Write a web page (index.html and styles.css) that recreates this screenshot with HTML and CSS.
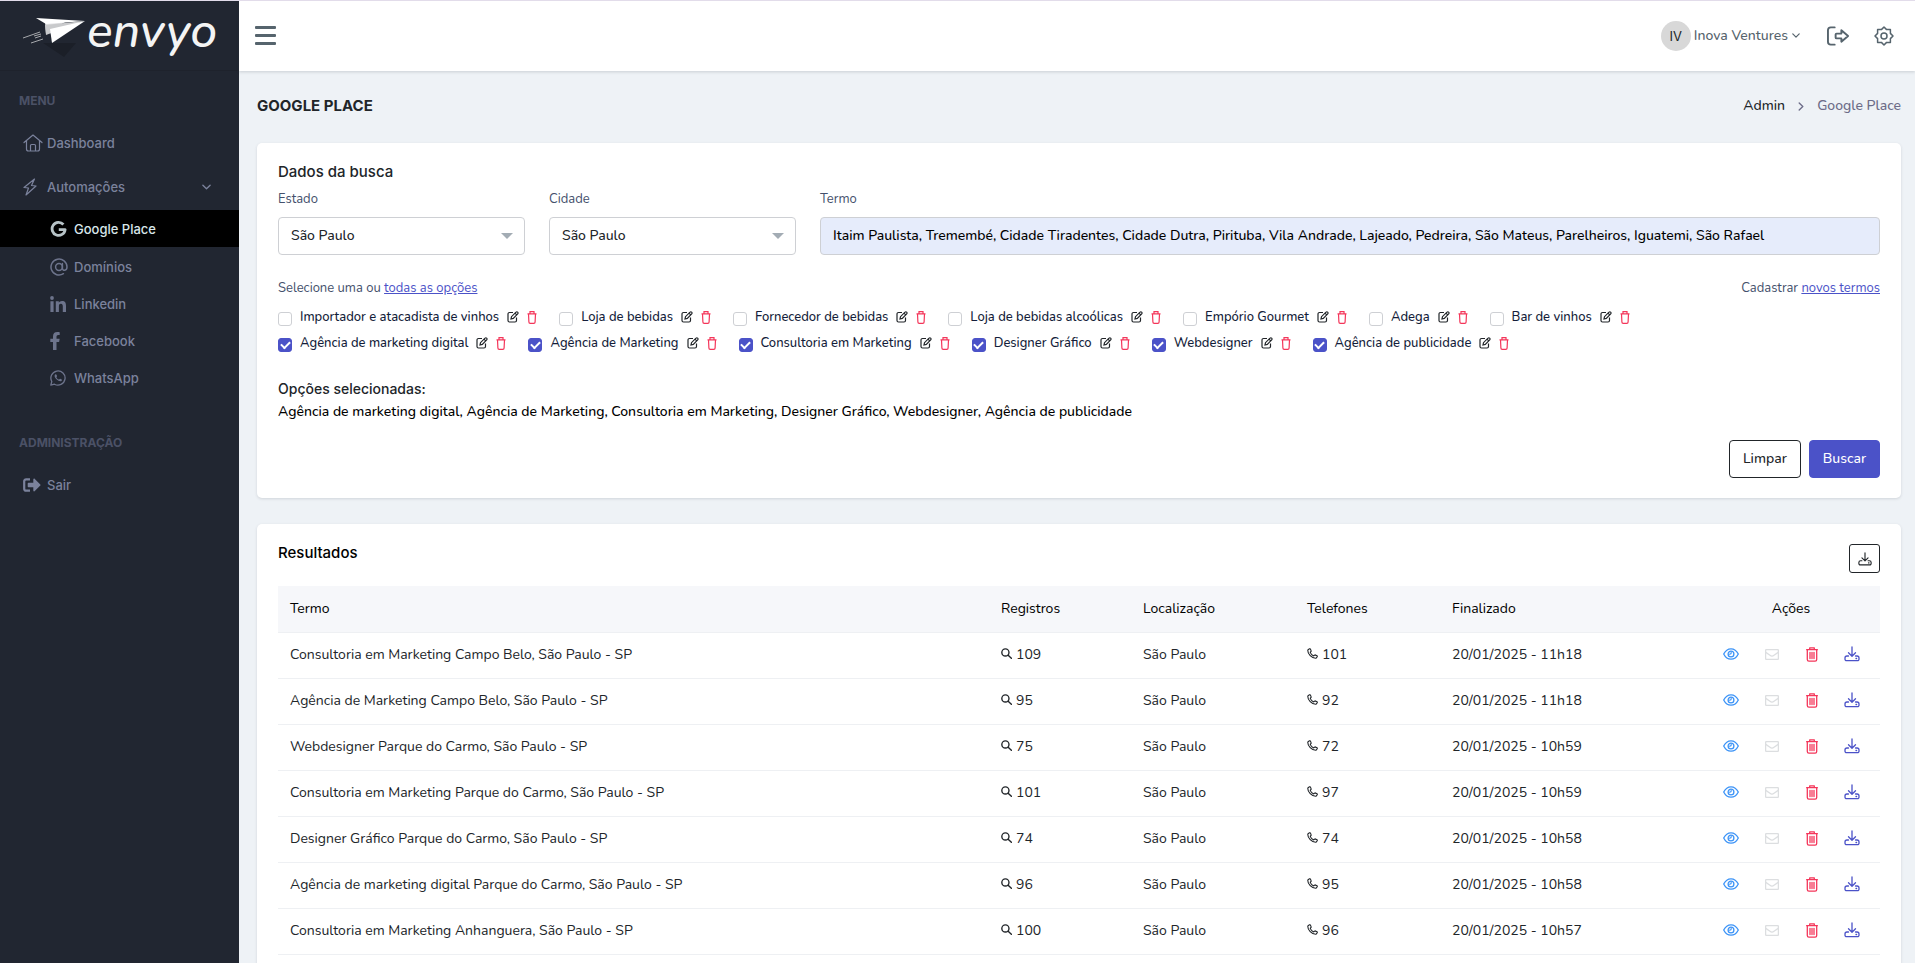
FILE: index.html
```html
<!DOCTYPE html>
<html lang="pt-BR">

<head>
  <meta charset="utf-8">
  <title>Google Place</title>
  <link rel="stylesheet" href="styles.css">
</head>

<body>

  <svg class="sprite" aria-hidden="true">
    <symbol id="i-home" viewBox="0 0 20 18"><path d="M1 8.500 10 1l9 7.500M3.500 6.800V15a2 2 0 0 0 2 2h9a2 2 0 0 0 2-2V6.800M7.500 17v-5.500a1 1 0 0 1 1-1h3a1 1 0 0 1 1 1V17" /></symbol>
    <symbol id="i-bolt" viewBox="0 0 14 18"><path d="M11.500 1 1 9.500 5.500 10 3 17 13 8 8.500 7.500z" /></symbol>
    <symbol id="i-down" viewBox="0 0 10 6"><path d="M1 1l4 4 4-4" /></symbol>
    <symbol id="i-right" viewBox="0 0 6 10"><path d="M1 1l4 4-4 4" /></symbol>
    <symbol id="i-google" viewBox="0 0 18 18"><path d="M14.200 4.200A6.900 6.900 0 1 0 16 9.600H9.300" /></symbol>
    <symbol id="i-at" viewBox="0 0 18 18"><circle cx="9" cy="9" r="3.400" /><path d="M12.400 5.600v4.600c0 3 4.600 2.600 4.600-1.200a8 8 0 1 0-3.600 6.700" /></symbol>
    <symbol id="i-linkedin" viewBox="0 0 16 16"><circle cx="2" cy="2" r="1.900" /><path d="M.4 5.300h3.200V16H.4zM5.800 5.300h3v1.500c.6-1 1.800-1.800 3.200-1.800 3.200 0 4 2 4 4.900V16h-3.200v-5.400c0-1.400-.2-2.900-1.900-2.900-1.800 0-2 1.400-2 2.800V16H5.800z" /></symbol>
    <symbol id="i-facebook" viewBox="0 0 11 18"><path d="M3 18V10H.3V6.700H3V4.400C3 1.600 4.600.1 7.200.1c1.200 0 2.500.2 2.500.2V3H8.300C7 3 6.500 3.900 6.500 4.800v1.900h3.200L9.100 10H6.500v8z" /></symbol>
    <symbol id="i-whatsapp" viewBox="0 0 16 16"><path d="M.8 15.200 1.800 11.500A7.100 7.100 0 1 1 4.500 14.200z" /><path d="M5.700 4.300c-1.800.8-1.200 3.200.8 5s4.300 2.700 5.300 1.100c.5-.8-.1-1-1.500-1.700-.8-.3-.9.900-1.500.8-1-.3-2.100-1.300-2.400-2.300-.1-.4.800-.6.600-1.200-.4-1-.7-1.900-1.300-1.700z" class="solid" /></symbol>
    <symbol id="i-out-solid" viewBox="0 0 18 14"><path d="M7 1.300H3.200a2 2 0 0 0-2 2v7.400a2 2 0 0 0 2 2H7" class="stroke" /><path d="M5.500 4.800h4.800V1.500c0-.8.900-1.200 1.500-.6l5.500 5.500c.4.400.4.900 0 1.200l-5.500 5.500c-.6.600-1.500.2-1.500-.6V9.200H5.500c-.5 0-.8-.3-.8-.8V5.600c0-.5.300-.8.800-.8z" /></symbol>
    <symbol id="i-out" viewBox="0 0 24 20"><path d="M8 1H4a3 3 0 0 0-3 3v12a3 3 0 0 0 3 3h4M10 7.500h5V4l7 6-7 6v-3.500h-5a1 1 0 0 1-1-1v-3a1 1 0 0 1 1-1z" /></symbol>
    <symbol id="i-gear" viewBox="0 0 20 20"><path d="M10 1 12.600 3.600H16.400V7.400L19 10 16.400 12.600V16.400H12.600L10 19 7.400 16.400H3.600V12.600L1 10 3.600 7.400V3.600H7.400z" /><circle cx="10" cy="10" r="3" /></symbol>
    <symbol id="i-edit" viewBox="0 0 12 12"><path d="M6 1.500H2.500A1.500 1.500 0 0 0 1 3v6.500A1.500 1.500 0 0 0 2.500 11H8a1.500 1.500 0 0 0 1.500-1.500V6.500M4 8l.5-2.300L9 1.200a1.100 1.100 0 0 1 1.700 1.600L6.300 7.400zM8 2.200 9.700 3.900" /></symbol>
    <symbol id="i-bin" viewBox="0 0 10 13"><path d="M.5 2.800h9M3 2.800V.7h4v2.100M1.500 2.800l.4 8.200c0 .8.500 1.300 1.300 1.300h3.600c.8 0 1.300-.5 1.300-1.300l.4-8.200" /></symbol>
    <symbol id="i-save" viewBox="0 0 16 16"><path d="M8 1v9M4.500 6.800 8 10.200l3.500-3.400M4.500 10H3a2 2 0 0 0-2 2v1.200a1.500 1.500 0 0 0 1.500 1.500h11a1.500 1.500 0 0 0 1.500-1.500V12a2 2 0 0 0-2-2h-1.500M12 12.500h.6" /></symbol>
    <symbol id="i-search" viewBox="0 0 12 12"><circle cx="4.800" cy="4.800" r="3.900" /><path d="M7.800 7.800l3.500 3.500" /></symbol>
    <symbol id="i-phone" viewBox="0 0 12 12"><path d="M2.700.9.900 2.100C.5 6.500 5.200 11.500 9.900 11.200l1.300-1.800c.2-.4 0-.8-.3-1L8.700 7.500 7.300 8.600C5.600 7.900 4.200 6.500 3.500 4.800L4.600 3.400 3.800 1.200C3.600.8 3.100.7 2.700.9z" /></symbol>
    <symbol id="i-eye" viewBox="0 0 16 12"><path d="M.7 6C2.500 2.400 5 .8 8 .8S13.500 2.400 15.300 6C13.500 9.600 11 11.200 8 11.200S2.500 9.600.7 6z" /><circle cx="8" cy="6" r="2.900" /><path d="M6.700 6.200A1.500 1.500 0 0 0 8.200 4.700" /></symbol>
    <symbol id="i-mail" viewBox="0 0 14 11"><rect x=".6" y=".6" width="12.800" height="9.800" rx="1" /><path d="M.8 3.400 5 6.300c1.300 1 2.700 1 4 0l4.200-2.900" /></symbol>
    <symbol id="i-trash" viewBox="0 0 12 15"><path d="M.6 2.700h10.800M3.700 2.700V.8h4.600v1.900M1.300 2.700v9.800c0 1 .7 1.700 1.600 1.700h6.200c1 0 1.600-.7 1.600-1.700V2.700M4 5.300v6.300M6 5.300v6.300M8 5.300v6.300" /></symbol>
  </svg>

  <aside class="sidebar">
    <a class="logo" href="#">
      <svg class="plane" viewBox="0 0 64 42" aria-hidden="true">
        <path class="shade" d="M20 27h33L41 41z" />
        <path class="tail" d="M22 6h20L23 18z" />
        <path class="wing" d="M13 2l49 3-39 3z" />
        <path class="fold" d="M22 9 61 5 23 19z" />
        <path class="wing" d="M27 13 62 5 29 27z" />
        <path class="trail" d="M0 22l17-6M11 20l7-2M12 22l6-2M8 27l12-4" />
      </svg>
      <span>envyo</span>
    </a>
    <nav>
      <h6>MENU</h6>
      <ul class="menu">
        <li><a href="#"><svg class="line home"><use href="#i-home" /></svg>Dashboard</a></li>
        <li>
          <a href="#"><svg class="line bolt"><use href="#i-bolt" /></svg>Automações<svg class="line caret"><use href="#i-down" /></svg></a>
          <ul class="submenu">
            <li class="active"><a href="#"><svg class="line google"><use href="#i-google" /></svg>Google Place</a></li>
            <li><a href="#"><svg class="line at"><use href="#i-at" /></svg>Domínios</a></li>
            <li><a href="#"><svg class="fill in"><use href="#i-linkedin" /></svg>Linkedin</a></li>
            <li><a href="#"><svg class="fill fb"><use href="#i-facebook" /></svg>Facebook</a></li>
            <li><a href="#"><svg class="line wa"><use href="#i-whatsapp" /></svg>WhatsApp</a></li>
          </ul>
        </li>
      </ul>
      <h6>ADMINISTRAÇÃO</h6>
      <ul class="menu">
        <li><a href="#"><svg class="fill exit"><use href="#i-out-solid" /></svg>Sair</a></li>
      </ul>
    </nav>
  </aside>

  <div class="page">
    <header class="topbar">
      <button class="burger" type="button" aria-label="Menu"><i></i><i></i><i></i></button>
      <div class="user">
        <button class="profile" type="button"><span class="avatar">IV</span>Inova Ventures<svg class="line"><use href="#i-down" /></svg></button>
        <button class="out" type="button" aria-label="Sair"><svg class="line"><use href="#i-out" /></svg></button>
        <button class="gear" type="button" aria-label="Configurações"><svg class="line"><use href="#i-gear" /></svg></button>
      </div>
    </header>

    <main>
      <div class="title">
        <h1>GOOGLE PLACE</h1>
        <div class="crumbs"><a href="#">Admin</a><svg class="line"><use href="#i-right" /></svg><span>Google Place</span></div>
      </div>

      <form class="card search">
        <h2>Dados da busca</h2>
        <div class="fields">
          <div class="field">
            <label for="estado">Estado</label>
            <div class="select"><select id="estado"><option>São Paulo</option></select></div>
          </div>
          <div class="field">
            <label for="cidade">Cidade</label>
            <div class="select"><select id="cidade"><option>São Paulo</option></select></div>
          </div>
          <div class="field wide">
            <label for="termo">Termo</label>
            <input type="text" id="termo" value="Itaim Paulista, Tremembé, Cidade Tiradentes, Cidade Dutra, Pirituba, Vila Andrade, Lajeado, Pedreira, São Mateus, Parelheiros, Iguatemi, São Rafael">
          </div>
        </div>
        <div class="hint">
          <span>Selecione uma ou <a href="#">todas as opções</a></span>
          <span>Cadastrar <a href="#">novos termos</a></span>
        </div>
        <div class="options">
          <div class="option"><input type="checkbox" id="o1"><label for="o1">Importador e atacadista de vinhos</label><button type="button" aria-label="Editar"><svg class="edit"><use href="#i-edit" /></svg></button><button type="button" aria-label="Excluir"><svg class="bin"><use href="#i-bin" /></svg></button></div>
          <div class="option"><input type="checkbox" id="o2"><label for="o2">Loja de bebidas</label><button type="button" aria-label="Editar"><svg class="edit"><use href="#i-edit" /></svg></button><button type="button" aria-label="Excluir"><svg class="bin"><use href="#i-bin" /></svg></button></div>
          <div class="option"><input type="checkbox" id="o3"><label for="o3">Fornecedor de bebidas</label><button type="button" aria-label="Editar"><svg class="edit"><use href="#i-edit" /></svg></button><button type="button" aria-label="Excluir"><svg class="bin"><use href="#i-bin" /></svg></button></div>
          <div class="option"><input type="checkbox" id="o4"><label for="o4">Loja de bebidas alcoólicas</label><button type="button" aria-label="Editar"><svg class="edit"><use href="#i-edit" /></svg></button><button type="button" aria-label="Excluir"><svg class="bin"><use href="#i-bin" /></svg></button></div>
          <div class="option"><input type="checkbox" id="o5"><label for="o5">Empório Gourmet</label><button type="button" aria-label="Editar"><svg class="edit"><use href="#i-edit" /></svg></button><button type="button" aria-label="Excluir"><svg class="bin"><use href="#i-bin" /></svg></button></div>
          <div class="option"><input type="checkbox" id="o6"><label for="o6">Adega</label><button type="button" aria-label="Editar"><svg class="edit"><use href="#i-edit" /></svg></button><button type="button" aria-label="Excluir"><svg class="bin"><use href="#i-bin" /></svg></button></div>
          <div class="option"><input type="checkbox" id="o7"><label for="o7">Bar de vinhos</label><button type="button" aria-label="Editar"><svg class="edit"><use href="#i-edit" /></svg></button><button type="button" aria-label="Excluir"><svg class="bin"><use href="#i-bin" /></svg></button></div>
        </div>
        <div class="options">
          <div class="option"><input type="checkbox" id="o8" checked><label for="o8">Agência de marketing digital</label><button type="button" aria-label="Editar"><svg class="edit"><use href="#i-edit" /></svg></button><button type="button" aria-label="Excluir"><svg class="bin"><use href="#i-bin" /></svg></button></div>
          <div class="option"><input type="checkbox" id="o9" checked><label for="o9">Agência de Marketing</label><button type="button" aria-label="Editar"><svg class="edit"><use href="#i-edit" /></svg></button><button type="button" aria-label="Excluir"><svg class="bin"><use href="#i-bin" /></svg></button></div>
          <div class="option"><input type="checkbox" id="o10" checked><label for="o10">Consultoria em Marketing</label><button type="button" aria-label="Editar"><svg class="edit"><use href="#i-edit" /></svg></button><button type="button" aria-label="Excluir"><svg class="bin"><use href="#i-bin" /></svg></button></div>
          <div class="option"><input type="checkbox" id="o11" checked><label for="o11">Designer Gráfico</label><button type="button" aria-label="Editar"><svg class="edit"><use href="#i-edit" /></svg></button><button type="button" aria-label="Excluir"><svg class="bin"><use href="#i-bin" /></svg></button></div>
          <div class="option"><input type="checkbox" id="o12" checked><label for="o12">Webdesigner</label><button type="button" aria-label="Editar"><svg class="edit"><use href="#i-edit" /></svg></button><button type="button" aria-label="Excluir"><svg class="bin"><use href="#i-bin" /></svg></button></div>
          <div class="option"><input type="checkbox" id="o13" checked><label for="o13">Agência de publicidade</label><button type="button" aria-label="Editar"><svg class="edit"><use href="#i-edit" /></svg></button><button type="button" aria-label="Excluir"><svg class="bin"><use href="#i-bin" /></svg></button></div>
        </div>
        <h3>Opções selecionadas:</h3>
        <p class="selected">Agência de marketing digital, Agência de Marketing, Consultoria em Marketing, Designer Gráfico, Webdesigner, Agência de publicidade</p>
        <div class="buttons">
          <button class="btn outline" type="reset">Limpar</button>
          <button class="btn primary" type="button">Buscar</button>
        </div>
      </form>

      <section class="card results">
        <div class="results-head">
          <h2>Resultados</h2>
          <button class="export" type="button" aria-label="Baixar"><svg class="line"><use href="#i-save" /></svg></button>
        </div>
        <table>
          <thead>
            <tr>
              <th>Termo</th>
              <th class="c-reg">Registros</th>
              <th class="c-loc">Localização</th>
              <th class="c-tel">Telefones</th>
              <th class="c-fin">Finalizado</th>
              <th class="c-act">Ações</th>
            </tr>
          </thead>
          <tbody id="rows"></tbody>
        </table>
      </section>
    </main>
  </div>

  <script src="script.js"></script>

</body>

</html>
```
FILE: styles.css
```css
* {
  box-sizing: border-box;
}

body {
  margin: 0;
  min-height: 100vh;
  display: flex;
  border-top: 1px solid #e2dcea;
  background: #eef2f6;
  color: #212529;
  font: 14px/20px Nunito, Lato, sans-serif;
}

h1, h2, h3, h6, p, ul {
  margin: 0;
  padding: 0;
}

ul {
  list-style: none;
}

button {
  border: 0;
  padding: 0;
  background: none;
  color: inherit;
  font: inherit;
  cursor: pointer;
}

svg {
  flex: none;
}

.sprite {
  position: absolute;
  width: 0;
  height: 0;
}

.line {
  fill: none;
  stroke: currentColor;
  stroke-width: 1.5;
  stroke-linejoin: round;
  stroke-linecap: round;
}

.fill {
  fill: currentColor;
}

.solid {
  fill: currentColor;
  stroke: none;
}

.stroke {
  fill: none;
  stroke: currentColor;
  stroke-width: 2.2;
}

/* sidebar */
.sidebar {
  flex: none;
  width: 239px;
  background: #212631;
  font: 500 13px/20px Inter, sans-serif;
}

.logo {
  display: flex;
  height: 70px;
  padding-left: 23px;
  color: #f4f4f4;
  font: 500 48px/60px Nunito, Lato, sans-serif;
  font-style: italic;
  text-decoration: none;
  border-bottom: 1px solid #1e222c;
}

.plane {
  width: 64px;
  height: 42px;
  margin-top: 15px;
}

.wing {
  fill: #fff;
}

.fold {
  fill: #c9cacc;
}

.tail {
  fill: #e3e3e5;
}

.shade {
  fill: #1b1f28;
}

.trail {
  fill: none;
  stroke: #c9cacc;
  stroke-width: 0.8;
}

.sidebar h6 {
  padding: 20px 19px 10px;
  color: #4b5166;
  font-size: 12px;
  font-weight: 700;
}

.menu > li > a {
  display: flex;
  align-items: center;
  height: 44px;
  padding: 0 28px 0 23px;
}

.sidebar li a {
  color: #7b829c;
  text-decoration: none;
}

.home {
  width: 20px;
  height: 18px;
  margin-right: 4px;
  stroke-width: 1.2;
}

.bolt {
  width: 14px;
  height: 18px;
  margin-right: 10px;
  stroke-width: 1.2;
}

.exit {
  width: 18px;
  height: 14px;
  margin-right: 6px;
}

.caret {
  width: 9px;
  height: 6px;
  margin-left: auto;
}

.submenu {
  padding: 1px 0 17px;
}

.submenu a {
  display: flex;
  align-items: center;
  height: 37px;
  padding-left: 50px;
}

.submenu .active + li {
  margin-top: 1px;
}

.submenu svg {
  opacity: 0.85;
}

.submenu .active {
  background: #000;
}

.sidebar .active a {
  color: #d8e6ea;
}

.google {
  width: 17px;
  height: 18px;
  margin-right: 7px;
  stroke-width: 3;
  stroke-linecap: butt;
}

.at {
  width: 18px;
  height: 18px;
  margin-right: 6px;
}

.in {
  width: 16px;
  height: 16px;
  margin-right: 8px;
}

.fb {
  width: 11px;
  height: 18px;
  margin-right: 13px;
}

.wa {
  width: 16px;
  height: 16px;
  margin-right: 8px;
  stroke-width: 1.3;
}

/* top bar */
.page {
  flex: 1;
  min-width: 0;
}

.topbar {
  display: flex;
  justify-content: space-between;
  align-items: center;
  height: 70px;
  padding: 0 21px 1px 16px;
  background: #fff;
  box-shadow: 0 1px 3px rgba(56, 65, 74, 0.2);
  color: #56646d;
  font-weight: 500;
}

.burger i {
  display: block;
  width: 21px;
  height: 3px;
  border-radius: 1px;
  background: #56646d;
}

.burger i + i {
  margin-top: 5px;
}

.user {
  display: flex;
  align-items: center;
}

.profile {
  display: flex;
  align-items: center;
}

.avatar {
  width: 30px;
  height: 30px;
  margin-right: 3px;
  border-radius: 50%;
  background: #d8d8d8;
  color: #212529;
  font: 13px/30px Inter, sans-serif;
}

.profile svg {
  width: 8px;
  height: 5px;
  margin-left: 4px;
}

.out svg {
  width: 23px;
  height: 20px;
  margin-left: 27px;
  stroke-width: 2;
}

.gear svg {
  width: 20px;
  height: 20px;
  margin-left: 24px;
}

.out svg, .gear svg {
  display: block;
}

/* content */
main {
  padding: 0 14px 0 18px;
}

.title {
  display: flex;
  justify-content: space-between;
  align-items: center;
  height: 72px;
  padding-bottom: 2px;
}

h1 {
  font: 700 15px/20px Inter, sans-serif;
}

.crumbs {
  display: flex;
  align-items: center;
  gap: 13px;
  color: #6c6c88;
  font-weight: 500;
}

.crumbs a {
  color: #212529;
  text-decoration: none;
}

.crumbs svg {
  width: 6px;
  height: 9px;
}

.card {
  padding: 19px 21px 20px;
  border-radius: 5px;
  background: #fff;
  box-shadow: 0 1px 3px rgba(56, 65, 74, 0.16);
}

.card + .card {
  margin-top: 26px;
}

h2 {
  font: 500 15px/20px Inter, sans-serif;
}

.fields {
  display: grid;
  grid-template-columns: repeat(12, 1fr);
  gap: 24px;
  padding-top: 7px;
}

.field {
  grid-column: span 2;
}

.wide {
  grid-column: span 8;
}

.field label, .hint {
  display: block;
  color: #44506c;
  font-size: 13px;
}

.field input, .field select {
  display: block;
  width: 100%;
  height: 38px;
  margin-top: 8px;
  padding: 0 12px;
  border: 1px solid #ced0d4;
  border-radius: 4px;
  background: #fff;
  color: #212529;
  font: inherit;
  font-weight: 500;
}

.field input {
  padding-bottom: 2px;
  background: #e6ecfb;
  color: #000;
}

.field select {
  appearance: none;
}

.select {
  position: relative;
}

.select::after {
  content: "";
  position: absolute;
  right: 12px;
  top: 16px;
  border: solid transparent;
  border-width: 6px 6px 0;
  border-top-color: #a3acb4;
  pointer-events: none;
}

.field .select {
  margin-top: 8px;
}

.field .select select {
  margin-top: 0;
}

.hint {
  display: flex;
  justify-content: space-between;
  padding: 23px 0 6px;
}

.hint a {
  color: #4b52c8;
}

.options {
  display: flex;
  flex-wrap: wrap;
  gap: 0 22px;
}

.option {
  display: flex;
  align-items: center;
  height: 26px;
  color: #141d3a;
  font-size: 13px;
  font-weight: 500;
}

.option input {
  appearance: none;
  display: grid;
  place-items: center;
  width: 14px;
  height: 14px;
  margin: 3px 8px 0 0;
  border: 1px solid #ced0d4;
  border-radius: 3px;
}

.option input:checked {
  border-color: #4b52c8;
  background: #4b52c8;
}

.option input:checked::after {
  content: "";
  width: 7px;
  height: 4px;
  margin-top: -2px;
  border: solid #fff;
  border-width: 0 0 2px 2px;
  transform: rotate(-45deg);
}

.option button {
  display: flex;
  margin-left: 8px;
}

.edit {
  width: 12px;
  height: 12px;
  fill: none;
  stroke: #212529;
  stroke-width: 1.2;
}

.bin {
  width: 10px;
  height: 13px;
  fill: none;
  stroke: #f4365a;
  stroke-width: 1.2;
}

h3 {
  padding-top: 23px;
  font: 500 14px/20px Inter, sans-serif;
}

.selected {
  padding-top: 3px;
  color: #000;
  font-weight: 500;
}

.buttons {
  display: flex;
  justify-content: flex-end;
  gap: 8px;
  padding-top: 18px;
}

.btn {
  height: 38px;
  padding: 0 13px;
  border: 1px solid #212529;
  border-radius: 4px;
  font-weight: 500;
}

.primary {
  border-color: #4b52c8;
  background: #4b52c8;
  color: #fff;
}

/* results */
.results-head {
  display: flex;
  justify-content: space-between;
  align-items: flex-start;
  padding-bottom: 13px;
}

.results h2 {
  color: #000;
}

.export {
  display: flex;
  align-items: center;
  justify-content: center;
  width: 31px;
  height: 29px;
  margin-top: 1px;
  border: 1px solid #212529;
  border-radius: 3px;
}

.export svg {
  width: 14px;
  height: 14px;
  stroke-width: 1.3;
}

table {
  width: 100%;
  border-collapse: collapse;
  table-layout: fixed;
}

th {
  background: #f6f7fa;
  color: #000;
  font-weight: 400;
  text-align: left;
}

th, td {
  height: 46px;
  padding: 0 12px;
  border-bottom: 1px solid #eef0f3;
}

.c-reg {
  width: 142px;
}

.c-loc {
  width: 164px;
}

.c-tel {
  width: 145px;
}

.c-fin {
  width: 262px;
}

.c-act {
  width: 178px;
  text-align: center;
}

td > .line {
  width: 11px;
  height: 11px;
  margin-right: 4px;
}

td .phone {
  stroke-width: 1.2;
}

.actions {
  display: flex;
  justify-content: space-between;
  align-items: center;
  padding: 0 8px 2px 9px;
}

.actions button {
  display: flex;
}

.actions svg {
  stroke-width: 1.3;
}

.eye {
  width: 16px;
  height: 12px;
  color: #3b93f7;
}

.mail {
  width: 14px;
  height: 11px;
  color: #dcdee0;
}

.trash {
  width: 12px;
  height: 15px;
  color: #f4365a;
}

.save {
  width: 16px;
  height: 16px;
  color: #4b52c8;
}
```
FILE: script.js
```js
var results = [
  ['Consultoria em Marketing Campo Belo, São Paulo - SP', 109, 101, '20/01/2025 - 11h18'],
  ['Agência de Marketing Campo Belo, São Paulo - SP', 95, 92, '20/01/2025 - 11h18'],
  ['Webdesigner Parque do Carmo, São Paulo - SP', 75, 72, '20/01/2025 - 10h59'],
  ['Consultoria em Marketing Parque do Carmo, São Paulo - SP', 101, 97, '20/01/2025 - 10h59'],
  ['Designer Gráfico Parque do Carmo, São Paulo - SP', 74, 74, '20/01/2025 - 10h58'],
  ['Agência de marketing digital Parque do Carmo, São Paulo - SP', 96, 95, '20/01/2025 - 10h58'],
  ['Consultoria em Marketing Anhanguera, São Paulo - SP', 100, 96, '20/01/2025 - 10h57']
];

var icon = function (name, cls) {
  return '<svg class="line ' + cls + '"><use href="#i-' + name + '" /></svg>';
}
var action = function (name, label) {
  return '<button type="button" aria-label="' + label + '">' + icon(name, name) + '</button>';
}

var html = '';
for (var i = 0; i < results.length; i++) {
  var r = results[i];
  html += '<tr><td>' + r[0] + '</td>' +
    '<td>' + icon('search', 'search-icon') + r[1] + '</td>' +
    '<td>São Paulo</td>' +
    '<td>' + icon('phone', 'phone') + r[2] + '</td>' +
    '<td>' + r[3] + '</td>' +
    '<td><div class="actions">' + action('eye', 'Ver') + action('mail', 'Enviar') +
    action('trash', 'Excluir') + action('save', 'Baixar') + '</div></td></tr>';
}
document.getElementById('rows').innerHTML = html;
```
